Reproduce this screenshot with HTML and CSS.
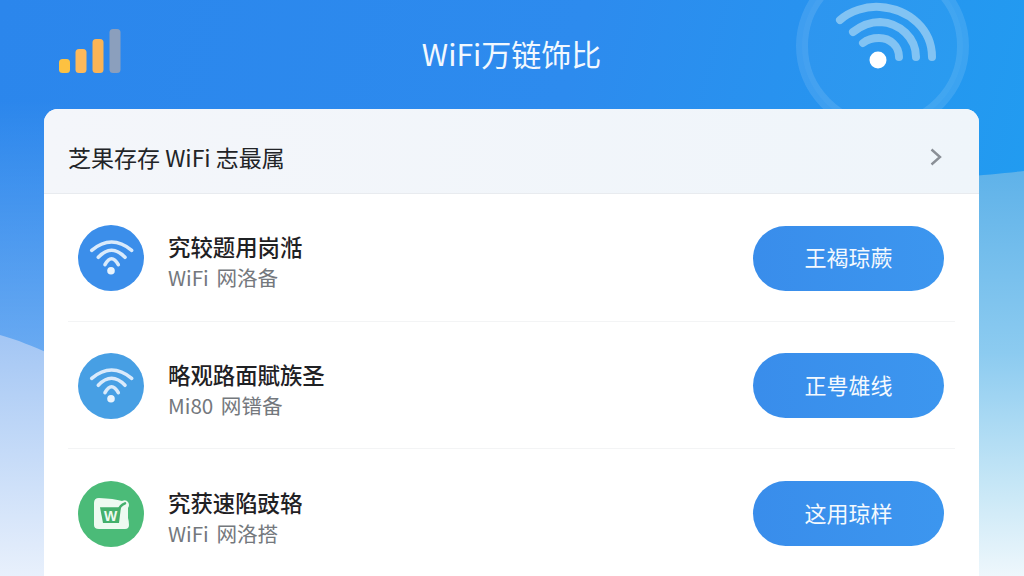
FILE: index.html
```html
<!DOCTYPE html>
<html lang="zh">
<head>
<meta charset="utf-8">
<title>WiFi万链饰比</title>
<link rel="stylesheet" href="styles.css">
</head>
<body>
<div class="page">
  <svg class="backdrop" viewBox="0 0 1024 576" aria-hidden="true">
    <defs>
      <linearGradient id="glowL" x1="0" y1="0" x2="0" y2="1">
        <stop offset="0" stop-color="#fff" stop-opacity="0"/>
        <stop offset="1" stop-color="#fff" stop-opacity="0.3"/>
      </linearGradient>
      <linearGradient id="waveL" x1="0" y1="0" x2="0" y2="1">
        <stop offset="0" stop-color="#a3c6f4"/>
        <stop offset="1" stop-color="#e8f0fc"/>
      </linearGradient>
      <linearGradient id="waveR" x1="0" y1="0" x2="0" y2="1">
        <stop offset="0" stop-color="#5fb2e9"/>
        <stop offset="0.45" stop-color="#8ccbf0"/>
        <stop offset="0.77" stop-color="#c5e6f6"/>
        <stop offset="1" stop-color="#eef7fc"/>
      </linearGradient>
    </defs>
    <rect x="0" y="100" width="60" height="260" fill="url(#glowL)"/>
    <path d="M0 335C18 340 32 346 50 354V576H0Z" fill="url(#waveL)"/>
    <path d="M960 177C985 175 1005 173 1024 171V576H960Z" fill="url(#waveR)"/>
    <circle cx="882.5" cy="46" r="80.5" fill="#fff" fill-opacity="0.03" stroke="#fff" stroke-opacity="0.11" stroke-width="12"/>
    <g fill="none" stroke="#82c3f3" stroke-width="8" stroke-linecap="round">
      <path d="M840 20C850 11 866 6 880 7C910 9 932 30 932 57"/>
      <path d="M853 32C862 25 872 22 880 22C900 23 916 38 916 57"/>
      <path d="M863 43C868 39 874 38 879 38C890 38 899 46 899 57"/>
    </g>
    <circle cx="878" cy="60" r="8.5" fill="#fff"/>
  </svg>

  <header class="topbar">
    <svg class="signal" width="62" height="44" viewBox="0 0 62 44" aria-hidden="true">
      <rect x="0" y="30" width="11" height="14" rx="3.5" fill="#fdc141"/>
      <rect x="16.5" y="20" width="11" height="24" rx="3.5" fill="#fcb95c"/>
      <rect x="33.5" y="10" width="11" height="34" rx="3.5" fill="#fbb455"/>
      <rect x="50.5" y="0" width="11" height="44" rx="3.5" fill="#8b9fbd"/>
    </svg>
    <h1 class="title">WiFi万链饰比</h1>
  </header>

  <main class="card">
    <div class="card-head">
      <span class="card-title">芝果存存 WiFi 志最属</span>
      <svg class="chevron" width="14" height="20" viewBox="0 0 14 20" aria-hidden="true">
        <path d="M2.5 2.5L11 10L2.5 17.5" fill="none" stroke="#8a8f96" stroke-width="2.4"/>
      </svg>
    </div>
    <div class="rows">
      <div class="row">
        <div class="badge badge-blue">
          <svg width="66" height="66" viewBox="0 0 66 66" aria-hidden="true">
            <g fill="none" stroke="#d9eafb" stroke-width="3.6" stroke-linecap="round">
              <path d="M13.7 25.3Q33.5 8.7 53.7 25.3"/>
              <path d="M20.3 32.3Q33.5 18.3 47 32.3"/>
              <path d="M27 39.7Q33.5 27.7 40.3 39.7"/>
            </g>
            <circle cx="33" cy="45.7" r="3.8" fill="#e8f3fd"/>
          </svg>
        </div>
        <div class="info">
          <div class="name">究较题用岗湉</div>
          <div class="sub">WiFi 网洛备</div>
        </div>
        <button class="action">王褐琼蕨</button>
      </div>
      <div class="row">
        <div class="badge badge-sky">
          <svg width="66" height="66" viewBox="0 0 66 66" aria-hidden="true">
            <g fill="none" stroke="#d9eafb" stroke-width="3.6" stroke-linecap="round">
              <path d="M13.7 25.3Q33.5 8.7 53.7 25.3"/>
              <path d="M20.3 32.3Q33.5 18.3 47 32.3"/>
              <path d="M27 39.7Q33.5 27.7 40.3 39.7"/>
            </g>
            <circle cx="33" cy="45.7" r="3.8" fill="#e8f3fd"/>
          </svg>
        </div>
        <div class="info">
          <div class="name">略观路面賦族圣</div>
          <div class="sub">Mi80 网镨备</div>
        </div>
        <button class="action">正甹雄线</button>
      </div>
      <div class="row">
        <div class="badge badge-green">
          <svg width="66" height="66" viewBox="0 0 66 66" aria-hidden="true">
            <path d="M21 17Q36 17.5 44 20Q48 18 50 21Q52 24 50 27L50 37Q51 40 51 44Q51 48 47 48L21 48Q16 48 16 44L16 22Q16 17 21 17Z" fill="#eefaf1"/>
            <path d="M22 26.3H43L41 42H25Z" fill="#44b06c"/>
            <path d="M40 31.3Q41 24.7 47 22.3" fill="none" stroke="#44b06c" stroke-width="2.4" stroke-linecap="round"/>
            <text class="badge-letter" x="32.5" y="39.6" text-anchor="middle">W</text>
          </svg>
        </div>
        <div class="info">
          <div class="name">究获速陷豉辂</div>
          <div class="sub">WiFi 网洛搭</div>
        </div>
        <button class="action">这用琼样</button>
      </div>
    </div>
  </main>
</div>
</body>
</html>
```
FILE: styles.css
```css
* { box-sizing: border-box; }
html, body { margin: 0; padding: 0; }
body {
  width: 1024px;
  height: 576px;
  overflow: hidden;
  font-family: "Noto Sans CJK SC", "Noto Sans", sans-serif;
}
.page {
  position: relative;
  width: 1024px;
  height: 576px;
  overflow: hidden;
  display: flex;
  flex-direction: column;
  padding: 0 45px 0 44px;
  background: linear-gradient(105deg, #2b86ec 0%, #2d8bee 50%, #1f9ff1 100%);
}
.backdrop {
  position: absolute;
  inset: 0;
  width: 1024px;
  height: 576px;
}
.topbar {
  position: relative;
  flex: 0 0 109px;
  display: flex;
  align-items: center;
  justify-content: center;
}
.signal {
  position: absolute;
  left: 14.5px;
  top: 29px;
  overflow: visible;
}
.title {
  margin: 0 0 4px 0;
  font-size: 30px;
  font-weight: 400;
  line-height: 1;
  color: #f2f8fe;
}
.card {
  position: relative;
  flex: 1;
  border-radius: 14px 14px 0 0;
  background: #fff;
  overflow: hidden;
}
.card-head {
  height: 85px;
  display: flex;
  align-items: center;
  justify-content: space-between;
  padding: 11px 36px 0 24px;
  background: linear-gradient(90deg, #f4f6fa, #eff5fa);
  border-bottom: 1px solid #e8ebef;
}
.card-title {
  font-size: 23px;
  color: #222427;
}
.rows {
  padding: 0 24px;
}
.row {
  height: 127.5px;
  display: flex;
  align-items: center;
  padding: 2px 11px 0 10px;
  border-bottom: 1px solid #f3f4f5;
}
.row:last-child { border-bottom: 0; }
.badge {
  width: 66px;
  height: 66px;
  flex: none;
  border-radius: 50%;
}
.badge svg { display: block; }
.badge-blue { background: #3b8eea; }
.badge-sky { background: #479fe4; }
.badge-green { background: #4bbb78; }
.badge-letter {
  font-family: "Liberation Sans", sans-serif;
  font-size: 14px;
  font-weight: 700;
  fill: #eefaf1;
}
.info {
  flex: 1;
  margin-left: 24px;
  padding-top: 7px;
}
.name {
  font-size: 22.4px;
  font-weight: 500;
  line-height: 30px;
  color: #1f2124;
}
.sub {
  margin-top: 1px;
  font-size: 20.6px;
  line-height: 30px;
  word-spacing: 3px;
  color: #74787d;
}
.action {
  width: 191px;
  height: 65px;
  flex: none;
  border: 0;
  border-radius: 33px;
  background: linear-gradient(90deg, #398deb, #3c96ef);
  color: #f4f9fe;
  font-family: inherit;
  font-size: 22px;
  padding: 0 0 4px;
}
```
